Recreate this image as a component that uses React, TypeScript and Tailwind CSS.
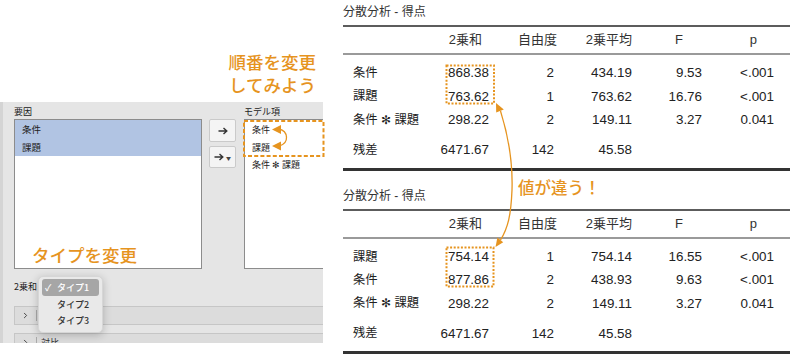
import { ChevronRight } from "lucide-react";

type Row = { label: string; ss: string; df: string; ms: string; f: string; p: string };

const table1: Row[] = [
  { label: "条件", ss: "868.38", df: "2", ms: "434.19", f: "9.53", p: "<.001" },
  { label: "課題", ss: "763.62", df: "1", ms: "763.62", f: "16.76", p: "<.001" },
  { label: "条件 ✻ 課題", ss: "298.22", df: "2", ms: "149.11", f: "3.27", p: "0.041" },
];

const table2: Row[] = [
  { label: "課題", ss: "754.14", df: "1", ms: "754.14", f: "16.55", p: "<.001" },
  { label: "条件", ss: "877.86", df: "2", ms: "438.93", f: "9.63", p: "<.001" },
  { label: "条件 ✻ 課題", ss: "298.22", df: "2", ms: "149.11", f: "3.27", p: "0.041" },
];

const residual: Row = { label: "残差", ss: "6471.67", df: "142", ms: "45.58", f: "", p: "" };

function DataRow({ r }: { r: Row }) {
  return (
    <div className="grid h-[23.33px] grid-cols-[97px_49px_65px_78px_70px_72px] items-center text-right text-[13.4px] text-[#222]">
      <div className="pl-[10px] text-left text-[12.3px]">{r.label}</div>
      <div>{r.ss}</div>
      <div>{r.df}</div>
      <div>{r.ms}</div>
      <div>{r.f}</div>
      <div>{r.p}</div>
    </div>
  );
}

function AnovaTable({ rows, className }: { rows: Row[]; className?: string }) {
  return (
    <div className={className}>
      <div className="mb-[5px] text-[12px] leading-[15px] text-[#333]">分散分析 - 得点</div>
      <div className="h-[2px] bg-[#5c5c5c]" />
      <div className="grid h-[26px] grid-cols-[97px_42px_75px_75px_51px_74px] items-center text-right text-[13px] text-[#333]">
        <div />
        <div>2乗和</div>
        <div>自由度</div>
        <div>2乗平均</div>
        <div>F</div>
        <div>p</div>
      </div>
      <div className="h-[2px] bg-[#9a9a9a]" />
      <div className="pb-[6px] pt-[6.7px]">
        {rows.map((r, i) => (
          <DataRow key={i} r={r} />
        ))}
        <div className="mt-[6.7px]">
          <DataRow r={residual} />
        </div>
      </div>
      <div className="h-[3px] bg-[#333]" />
    </div>
  );
}

function ArrowGlyph() {
  return (
    <svg width="10" height="8" viewBox="0 0 10 8">
      <path d="M0.5 4H8.5M5.5 1L8.8 4L5.5 7" fill="none" stroke="#333" strokeWidth="1.4" />
    </svg>
  );
}

function SideBar({ label }: { label?: string }) {
  return (
    <div className="flex h-[19px] items-center border border-[#c6c6c6] bg-[#dcdcdc]">
      <div className="flex w-[21px] justify-center">
        <ChevronRight size={9} strokeWidth={2.6} color="#444" />
      </div>
      <div className="h-[11px] w-px bg-[#aaa]" />
      {label && <span className="ml-[4px] text-[9px] text-[#333]">{label}</span>}
    </div>
  );
}

export default function App() {
  return (
    <div className="relative flex h-[357px] w-[800px] overflow-hidden bg-white font-['Liberation_Sans','Noto_Sans_CJK_JP',sans-serif]">
      {/* left: dialog */}
      <div className="flex w-[343px] flex-col">
        <div className="h-[102px] w-[323px] pr-[7px] pt-[50px] text-right font-['Noto_Sans_CJK_JP',sans-serif] text-[17.5px] font-medium leading-[23px] text-[#e6941f]">
          <div>順番を変更</div>
          <div>してみよう</div>
        </div>
        <div className="relative h-[241px] w-[323px] overflow-hidden border-l-[3px] border-[#d4d4d4] bg-[#e5e5e5] pl-[11px] font-['Noto_Sans_CJK_JP',sans-serif] text-[#222]">
          <div className="flex">
            <div className="w-[188px] shrink-0">
              <div className="flex h-[17px] items-end pb-[1px] text-[9px] leading-[12px]">要因</div>
              <div className="h-[150px] border border-[#8c8c8c] bg-white text-[9.5px]">
                <div className="bg-[#b1c4e3]">
                  <div className="flex h-[17.8px] items-center pl-[7px]">条件</div>
                  <div className="flex h-[17.8px] items-center pl-[7px]">課題</div>
                </div>
              </div>
            </div>
            <div className="ml-[7px] flex w-[27px] shrink-0 flex-col gap-[4px] pt-[17px]">
              <div className="flex h-[23px] items-center justify-center rounded-[2px] border border-[#cacaca] bg-[#f4f4f4]">
                <ArrowGlyph />
              </div>
              <div className="flex h-[22px] items-center justify-center gap-[2px] rounded-[2px] border border-[#cacaca] bg-[#f4f4f4]">
                <ArrowGlyph />
                <span className="text-[5px] leading-none text-[#444]">▼</span>
              </div>
            </div>
            <div className="ml-[8px] w-[110px] shrink-0">
              <div className="flex h-[17px] items-end pb-[1px] text-[9px] leading-[12px]">モデル項</div>
              <div className="h-[150px] border border-[#8c8c8c] bg-white pt-[1px] text-[9px]">
                <div className="flex h-[17.5px] items-center pl-[7px]">条件</div>
                <div className="flex h-[17.5px] items-center pl-[7px]">課題</div>
                <div className="flex h-[17.5px] items-center pl-[7px]">条件 ✻ 課題</div>
              </div>
            </div>
          </div>
          <div className="flex h-[36px] items-center text-[9px]">2乗和</div>
          <div className="mr-[-4px] mt-[1px]">
            <SideBar />
          </div>
          <div className="mr-[-4px] mt-[8px]">
            <SideBar label="対比" />
          </div>

          {/* annotation */}
          <div className="absolute left-[29px] top-[143px] font-['Noto_Sans_CJK_JP',sans-serif] text-[17.5px] font-medium leading-[20px] text-[#e6941f]">
            タイプを変更
          </div>

          {/* dropdown menu */}
          <div className="absolute left-[35px] top-[174px] h-[57px] w-[65px] rounded-[5px] border border-[#d6d6d6] bg-[#e9e9e9] px-[3px] pt-[2px] text-[9px] font-medium shadow-[0_2px_8px_rgba(0,0,0,0.22)]">
            <div className="flex h-[17px] items-center rounded-[3px] bg-[#a6a6a6] text-white">
              <span className="w-[15px] pl-[3px] text-[9px]">✓</span>
              <span>タイプ1</span>
            </div>
            <div className="flex h-[16.5px] items-center pl-[15px] text-[#333]">タイプ2</div>
            <div className="flex h-[16.5px] items-center pl-[15px] text-[#333]">タイプ3</div>
          </div>
        </div>
      </div>

      {/* right: results */}
      <div className="w-[447px] shrink-0">
        <AnovaTable rows={table1} className="pt-[5px]" />
        <AnovaTable rows={table2} className="mt-[18px]" />
      </div>

      <div className="absolute left-[518px] top-[177px] font-['Noto_Sans_CJK_JP',sans-serif] text-[16.5px] font-medium leading-[20px] text-[#e6941f]">
        値が違う！
      </div>

      {/* overlay drawings */}
      <svg className="pointer-events-none absolute left-0 top-0" width="800" height="357" viewBox="0 0 800 357">
        <g fill="none" stroke="#e6941f">
          <rect x="244" y="121" width="79.5" height="35" strokeWidth="2" strokeDasharray="4 2.2" />
          <rect x="446.5" y="65.5" width="47.5" height="38" strokeWidth="2" strokeDasharray="2 1.6" />
          <rect x="446.5" y="247.5" width="47" height="39" strokeWidth="2" strokeDasharray="2 1.6" />
          <path d="M279 129 C 288 131, 290 143, 279 146" strokeWidth="1.3" />
          <path d="M500.5 111 C 508 135, 513 160, 512 190 C 511 215, 508 228, 500.5 240" strokeWidth="1.3" />
        </g>
        <g fill="#e6941f">
          <polygon points="272,129.5 281,125 281,134" />
          <polygon points="272,146 281,141.5 281,150.5" />
          <polygon points="496,103 503.8,109.6 496.2,112.4" />
          <polygon points="495.5,247 503.2,242.3 497.4,237.4" />
        </g>
      </svg>
    </div>
  );
}
